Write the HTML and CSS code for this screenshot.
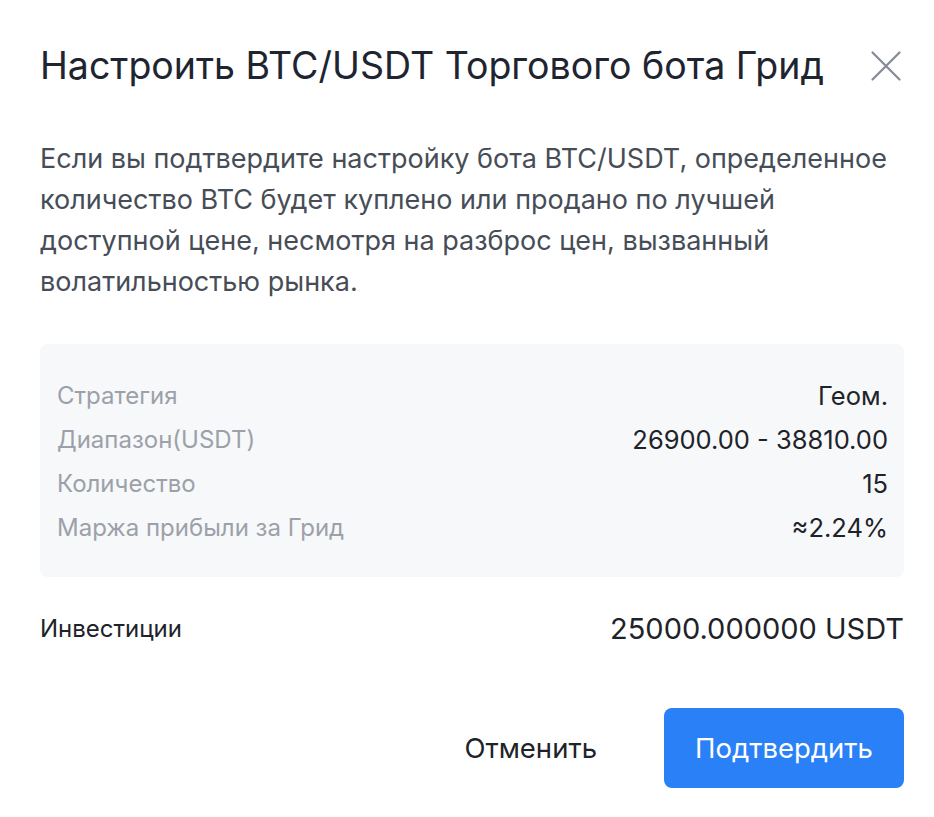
FILE: index.html
```html
<!DOCTYPE html>
<html lang="ru">
<head>
<meta charset="utf-8">
<title>Настроить бота</title>
<link rel="stylesheet" href="styles.css">
</head>
<body>
<div class="modal">
  <div class="header">
    <h1 class="title">Настроить BTC/USDT Торгового бота Грид</h1>
    <button class="close" aria-label="Закрыть">
      <svg width="32" height="32" viewBox="0 0 32 32"><path d="M2.5 2.5L29.5 29.5M29.5 2.5L2.5 29.5" stroke="#858b94" stroke-width="2.2" stroke-linecap="round" fill="none"/></svg>
    </button>
  </div>
  <p class="desc">Если вы подтвердите настройку бота BTC/USDT, определенное количество BTC будет куплено или продано по лучшей доступной цене, несмотря на разброс цен, вызванный волатильностью рынка.</p>
  <div class="card">
    <div class="row"><span class="label">Стратегия</span><span class="value">Геом.</span></div>
    <div class="row"><span class="label">Диапазон(USDT)</span><span class="value">26900.00 - 38810.00</span></div>
    <div class="row"><span class="label">Количество</span><span class="value">15</span></div>
    <div class="row"><span class="label">Маржа прибыли за Грид</span><span class="value">≈2.24%</span></div>
  </div>
  <div class="invest">
    <span class="invest-label">Инвестиции</span>
    <span class="invest-value">25000.000000 USDT</span>
  </div>
  <div class="actions">
    <button class="btn-cancel">Отменить</button>
    <button class="btn-confirm">Подтвердить</button>
  </div>
</div>
</body>
</html>
```
FILE: styles.css
```css
* { box-sizing: border-box; }
html, body { margin: 0; padding: 0; background: #ffffff; }
body {
  font-family: Inter, Roboto, "Liberation Sans", sans-serif;
  color: #1e2329;
}
.modal {
  width: 934px;
  padding: 40px 30px 0 40px;
}
.header {
  display: flex;
  align-items: center;
  justify-content: space-between;
  height: 52px;
}
.title {
  margin: 0;
  font-size: 37.5px;
  font-weight: 400;
  color: #1e2430;
  line-height: 52px;
}
.close {
  border: 0;
  background: none;
  padding: 0;
  width: 32px;
  height: 32px;
  margin-right: 2px;
  display: flex;
}
.desc {
  margin: 0;
  margin-top: 46px;
  padding-right: 10px;
  font-size: 27px;
  line-height: 41px;
  color: #474d57;
}
.card {
  margin-top: 42px;
  width: 864px;
  background: #f7f8fa;
  border-radius: 8px;
  padding: 29px 16px 28px 17px;
  display: flex;
  flex-direction: column;
}
.row {
  display: flex;
  justify-content: space-between;
  align-items: center;
  height: 44px;
  font-size: 24px;
}
.label { color: #9ca1a9; }
.value { color: #1e2329; font-size: 25.5px; }
.invest {
  width: 864px;
  display: flex;
  justify-content: space-between;
  align-items: center;
  margin-top: 28px;
  height: 46px;
}
.invest-label { font-size: 24px; color: #1e2329; }
.invest-value { font-size: 29px; color: #1e2329; }
.actions {
  width: 864px;
  display: flex;
  justify-content: flex-end;
  align-items: center;
  gap: 8px;
  margin-top: 57px;
}
.btn-cancel {
  border: 0;
  background: none;
  font-family: inherit;
  font-size: 27.5px;
  color: #1e2329;
  height: 80px;
  padding: 0 59px;
}
.btn-confirm {
  border: 0;
  background: #2a80f7;
  color: #ffffff;
  font-family: inherit;
  font-size: 27.5px;
  height: 80px;
  width: 240px;
  border-radius: 8px;
}
```
